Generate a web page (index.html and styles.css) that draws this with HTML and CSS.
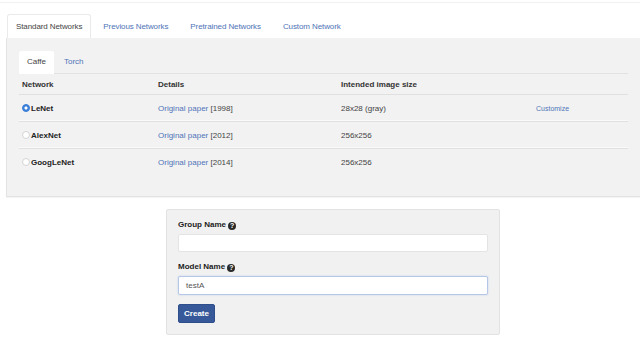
FILE: index.html
```html
<!DOCTYPE html>
<html lang="en">
<head>
    <meta charset="UTF-8">
    <title>New Model</title>
    <link rel="stylesheet" href="styles.css">
</head>
<body>
<div class="topbar"></div>
<ul class="nav-tabs">
    <li class="active">Standard Networks</li>
    <li>Previous Networks</li>
    <li>Pretrained Networks</li>
    <li>Custom Network</li>
</ul>
<div class="tab-panel">
    <ul class="sub-tabs">
        <li class="active">Caffe</li>
        <li>Torch</li>
    </ul>
    <table class="networks">
        <thead>
        <tr>
            <th class="c1">Network</th>
            <th class="c2">Details</th>
            <th class="c3">Intended image size</th>
            <th></th>
        </tr>
        </thead>
        <tbody>
        <tr>
            <td class="name"><span class="radio checked"></span>LeNet</td>
            <td><a>Original paper</a> [1998]</td>
            <td>28x28 (gray)</td>
            <td><a class="small">Customize</a></td>
        </tr>
        <tr>
            <td class="name"><span class="radio"></span>AlexNet</td>
            <td><a>Original paper</a> [2012]</td>
            <td>256x256</td>
            <td></td>
        </tr>
        <tr>
            <td class="name"><span class="radio"></span>GoogLeNet</td>
            <td><a>Original paper</a> [2014]</td>
            <td>256x256</td>
            <td></td>
        </tr>
        </tbody>
    </table>
</div>
<div class="well">
    <label>Group Name <span class="help">?</span></label>
    <div class="input"></div>
    <label>Model Name <span class="help">?</span></label>
    <div class="input focus">testA</div>
    <button class="btn">Create</button>
</div>
</body>
</html>
```
FILE: styles.css
```css
html,body{
    margin:0;
}
body{
    background:#fff;
    font-family:"Liberation Sans", Arial, sans-serif;
    font-size:8px;
    color:#333;
}
ul{
    padding:0;
    margin:0;
    list-style:none;
}
a{
    color:#4f74b8;
}
.topbar{
    height:2px;
    border-bottom:1px solid #f1f1f1;
}
.nav-tabs{
    display:flex;
    margin:11px 0 0 7px;
    letter-spacing:-0.1px;
}
.nav-tabs li{
    padding:7px 8px;
    line-height:9px;
    margin-right:3px;
    color:#4f74b8;
    border:1px solid transparent;
    border-bottom:0;
}
.nav-tabs li + li{
    margin-right:4px;
}
.nav-tabs li.active{
    color:#444;
    background:#fff;
    border-color:#eaeaea;
    border-radius:3px 3px 0 0;
}
.tab-panel{
    margin-left:6px;
    padding:13px 12px 21px;
    background:#f2f2f2;
    border-left:1px solid #e4e4e4;
    border-bottom:1px solid #e2e2e2;
    box-shadow:0 1px 1px rgba(0,0,0,0.04);
}
.sub-tabs{
    display:flex;
    border-bottom:1px solid #e2e2e2;
}
.sub-tabs li{
    padding:6px 8px 6px;
    line-height:10px;
    margin-right:2px;
    color:#4f74b8;
}
.sub-tabs li.active{
    color:#444;
    background:#fff;
    border-radius:2px 2px 0 0;
    margin-bottom:-1px;
    padding-bottom:7px;
}
.networks{
    width:100%;
    border-collapse:collapse;
}
.networks th{
    text-align:left;
    font-weight:bold;
    height:20px;
    padding:0 3px;
    border-bottom:1px solid #e0e0e0;
}
.networks td{
    height:26px;
    padding:0 3px;
    color:#444;
    border-bottom:1px solid #e0e0e0;
    box-shadow:inset 0 -1px 0 #fafafa;
}
.networks tr:last-child td{
    border-bottom:0;
    box-shadow:none;
}
.networks .c1{
    width:130px;
}
.networks .c2{
    width:177px;
}
.networks .c3{
    width:189px;
}
.networks .name{
    font-weight:bold;
    color:#222;
}
.radio{
    display:inline-block;
    width:6px;
    height:6px;
    border-radius:50%;
    border:1px solid #d4d4d4;
    background:#fff;
    vertical-align:-1px;
    margin-right:1px;
}
.radio.checked{
    border-color:#3b7fd9;
    background:radial-gradient(circle, #fff 0 1.3px, #3b7fd9 1.8px);
}
.small{
    font-size:7px;
}
.well{
    width:310px;
    margin:12px 0 0 166px;
    padding:10px 11px 11px;
    background:#f1f1f1;
    border:1px solid #e2e2e2;
    border-radius:2px;
}
.well label{
    display:block;
    font-weight:bold;
    line-height:10px;
    color:#222;
}
.help{
    display:inline-block;
    width:8px;
    height:8px;
    line-height:8px;
    border-radius:50%;
    background:#2a2a2a;
    color:#fff;
    font-size:7px;
    text-align:center;
    vertical-align:-1px;
}
.input{
    height:16px;
    line-height:16px;
    margin:4px 0 10px;
    padding:0 7px;
    background:#fff;
    border:1px solid #e4e4e4;
    border-radius:2px;
    color:#555;
}
.input.focus{
    height:17px;
    line-height:17px;
    margin-bottom:9px;
    border-color:#b5c6e6;
    box-shadow:0 0 2px rgba(102,140,220,0.35);
}
.btn{
    display:block;
    height:19px;
    width:37px;
    padding:0;
    font-family:inherit;
    font-size:8px;
    font-weight:bold;
    color:#fff;
    background:#37599a;
    border:1px solid #2f4f8c;
    border-radius:2px;
}
```
